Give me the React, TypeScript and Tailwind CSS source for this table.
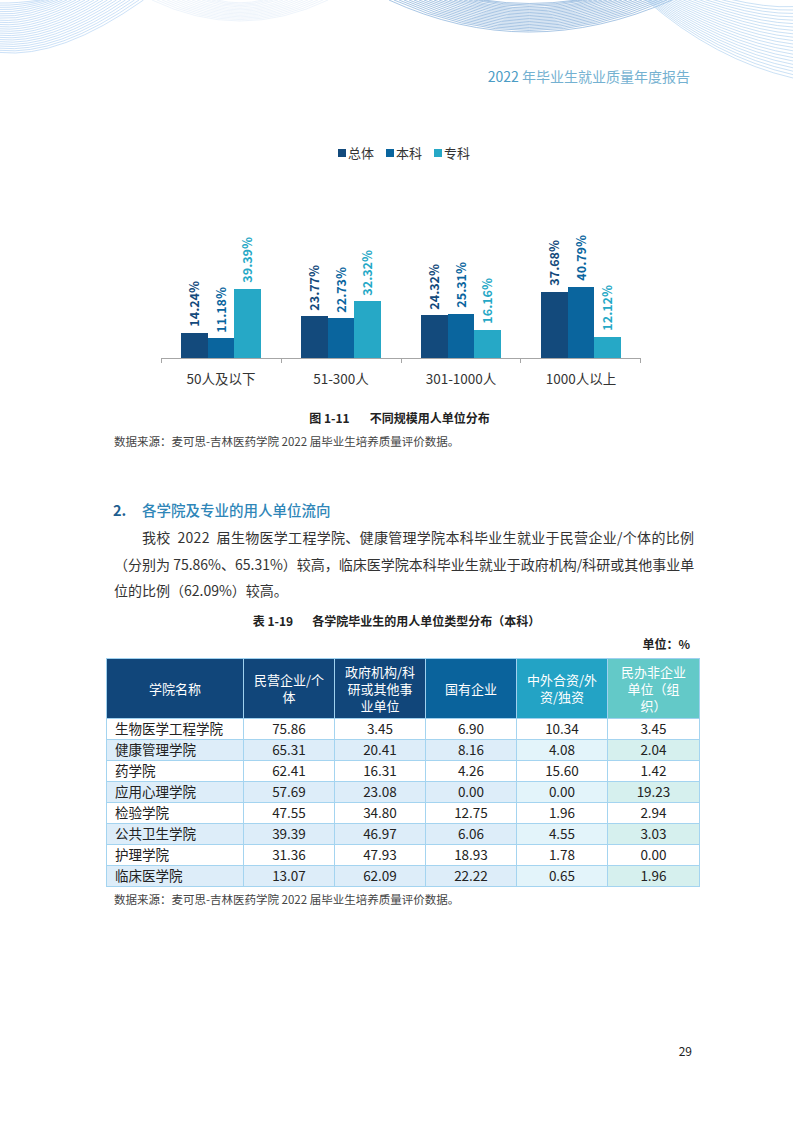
import React from "react";

const F = "font-['Noto_Sans_CJK_SC','Lato',sans-serif]";

const chart = [
  { name: "50人及以下", v: [14.24, 11.18, 39.39] },
  { name: "51-300人", v: [23.77, 22.73, 32.32] },
  { name: "301-1000人", v: [24.32, 25.31, 16.16] },
  { name: "1000人以上", v: [37.68, 40.79, 12.12] },
];

const series = [
  { name: "总体", bar: "bg-[#134a7c]", text: "text-[#134a7c]" },
  { name: "本科", bar: "bg-[#0a659e]", text: "text-[#0a659e]" },
  { name: "专科", bar: "bg-[#26a8c6]", text: "text-[#26a8c6]" },
];

const rows = [
  ["生物医学工程学院", "75.86", "3.45", "6.90", "10.34", "3.45"],
  ["健康管理学院", "65.31", "20.41", "8.16", "4.08", "2.04"],
  ["药学院", "62.41", "16.31", "4.26", "15.60", "1.42"],
  ["应用心理学院", "57.69", "23.08", "0.00", "0.00", "19.23"],
  ["检验学院", "47.55", "34.80", "12.75", "1.96", "2.94"],
  ["公共卫生学院", "39.39", "46.97", "6.06", "4.55", "3.03"],
  ["护理学院", "31.36", "47.93", "18.93", "1.78", "0.00"],
  ["临床医学院", "13.07", "62.09", "22.22", "0.65", "1.96"],
];

const headBg = ["bg-[#11467a]", "bg-[#11467a]", "bg-[#11467a]", "bg-[#0a639c]", "bg-[#23a3c5]", "bg-[#63c9c8]"];
const stripeBg = ["bg-[#ddedf9]", "bg-[#ddedf9]", "bg-[#ddedf9]", "bg-[#ddedf9]", "bg-[#e3f4fa]", "bg-[#d6f0ee]"];

const heads: React.ReactNode[] = [
  "学院名称",
  <>民营企业/个<br />体</>,
  <>政府机构/科<br />研或其他事<br />业单位</>,
  "国有企业",
  <>中外合资/外<br />资/独资</>,
  <>民办非企业<br />单位（组<br />织）</>,
];

function Waves() {
  const left = Array.from({ length: 24 }, (_, i) => {
    const y0 = 3 + i * 2.15;
    const x1 = 40 + i * 4.5;
    return `M0 ${y0} Q ${x1 * 0.42} ${y0 * 1.12} ${x1} 0`;
  });
  const faint = Array.from({ length: 14 }, (_, i) => {
    return `M${152 + i * 5} 0 Q 240 ${42 - i * 2.8} ${328 - i * 5} 0`;
  });
  const mid = Array.from({ length: 20 }, (_, i) => {
    return `M${389 + i * 5} 0 Q 528 ${64 - i * 3} ${672 - i * 5} 0`;
  });
  const right = Array.from({ length: 22 }, (_, i) => {
    return `M${646 - i * 0.5} ${-i * 1.5} Q ${715 + i * 1.2} ${60 - i * 2.4} 793 ${78 - i * 3.4}`;
  });
  return (
    <svg className="absolute top-0 left-0 pointer-events-none" width="793" height="130" viewBox="0 0 793 130" fill="none">
      {left.map((d, i) => (
        <path key={"l" + i} d={d} stroke="#a9cdf1" strokeWidth="0.6" />
      ))}
      {faint.map((d, i) => (
        <path key={"f" + i} d={d} stroke="#e2edf8" strokeWidth="0.6" />
      ))}
      {mid.map((d, i) => (
        <path key={"m" + i} d={d} stroke="#6f9fd2" strokeWidth="0.6" />
      ))}
      {right.map((d, i) => (
        <path key={"r" + i} d={d} stroke="#a8ccee" strokeWidth="0.6" />
      ))}
    </svg>
  );
}

function Chart() {
  return (
    <div className="w-[480px] ml-[161px]">
      {/* Legend */}
      <div className="flex justify-center items-center gap-[12px] pl-[6px] h-[16px] text-[13px] leading-[16px] text-[#333]">
        {series.map((s) => (
          <div key={s.name} className="flex items-center gap-[2px]">
            <span className={`w-[8px] h-[8px] ${s.bar}`} />
            <span>{s.name}</span>
          </div>
        ))}
      </div>

      <div className="grid grid-cols-4 h-[180px] mt-[17px]">
        {chart.map((g) => (
          <div key={g.name} className="flex justify-center items-end">
            {g.v.map((v, i) => (
              <div key={i} className="flex flex-col items-center w-[26.67px]">
                <span className={`[writing-mode:vertical-rl] rotate-180 text-[12.5px] font-bold leading-none mb-[6px] ${series[i].text}`}>
                  {v.toFixed(2)}%
                </span>
                <div className={`w-full ${series[i].bar}`} style={{ height: v * 1.752 }} />
              </div>
            ))}
          </div>
        ))}
      </div>
      {/* Axis */}
      <div className="flex border-t border-[#a6a6a6]">
        {chart.map((g, i) => (
          <div key={g.name} className={`flex-1 h-[4px] border-l border-[#a6a6a6] ${i === 3 ? "border-r" : ""}`} />
        ))}
      </div>
      <div className="grid grid-cols-4 mt-[6px] text-[13.5px] leading-[18px] text-[#333] text-center">
        {chart.map((g) => (
          <div key={g.name}>{g.name}</div>
        ))}
      </div>
    </div>
  );
}

function Table() {
  return (
    <table className="table-fixed border-collapse w-[593px] ml-[106px] text-[13.5px] text-[#222]">
      <colgroup>
        <col className="w-[137px]" />
        <col className="w-[91px]" />
        <col className="w-[91px]" />
        <col className="w-[91px]" />
        <col className="w-[91px]" />
        <col className="w-[92px]" />
      </colgroup>
      <thead>
        <tr className="h-[60px]">
          {heads.map((h, i) => (
            <th key={i} className={`border border-[#9fd1ef] font-normal text-white text-[13px] leading-[17px] text-center ${headBg[i]}`}>
              {h}
            </th>
          ))}
        </tr>
      </thead>
      <tbody>
        {rows.map((r, ri) => (
          <tr key={r[0]} className="h-[21px]">
            {r.map((c, ci) => (
              <td
                key={ci}
                className={`border border-[#a4d4f0] p-0 leading-[19px] ${ci === 0 ? "text-left pl-[8px]" : "text-center"} ${ri % 2 === 1 ? stripeBg[ci] : "bg-white"}`}
              >
                {c}
              </td>
            ))}
          </tr>
        ))}
      </tbody>
    </table>
  );
}

export default function App() {
  return (
    <div className={`relative w-[793px] h-[1122px] bg-white overflow-hidden ${F}`}>
      <Waves />

      {/* Running header */}
      <div className="relative pt-[66px] pr-[103px] text-right text-[14px] leading-[20px]">
        <span className="text-[#4b9cc5]">2022</span>
        <span className="text-[#74b1d1]"> 年毕业生就业质量年度报告</span>
      </div>

      <div className="mt-[59px]">
        <Chart />
      </div>

      {/* Figure caption */}
      <div className="mt-[22px] flex justify-center gap-[20px] text-[12px] leading-[18px] font-bold text-[#222] pl-[6px]">
        <span>图 1-11</span>
        <span>不同规模用人单位分布</span>
      </div>
      <div className="mt-[5px] pl-[114px] text-[11.5px] leading-[18px] text-[#444]">
        数据来源：麦可思-吉林医药学院 2022 届毕业生培养质量评价数据。
      </div>

      {/* Section heading */}
      <div className="mt-[50px] flex items-center pl-[113px] text-[14.5px] leading-[20px]">
        <span className="w-[29px] font-bold text-[#1d5f90]">2.</span>
        <span className="font-medium text-[#2f86b8]">各学院及专业的用人单位流向</span>
      </div>

      {/* Paragraph */}
      <div className="mt-[4px] ml-[114px] w-[576px] text-[14px] leading-[26.5px] text-[#333]">
        <div className="pl-[28px] tracking-[0.3px] whitespace-nowrap">
          我校&nbsp; 2022&nbsp; 届生物医学工程学院、健康管理学院本科毕业生就业于民营企业/个体的比例
        </div>
        <div className="whitespace-nowrap">
          （分别为 75.86%、65.31%）较高，临床医学院本科毕业生就业于政府机构/科研或其他事业单
        </div>
        <div>位的比例（62.09%）较高。</div>
      </div>

      {/* Table caption */}
      <div className="mt-[8px] flex justify-center gap-[19px] text-[12px] leading-[18px] font-bold text-[#222]">
        <span>表 1-19</span>
        <span>各学院毕业生的用人单位类型分布（本科）</span>
      </div>
      <div className="mt-[5px] pr-[103px] text-right text-[12px] leading-[18px] font-bold text-[#222]">单位：%</div>

      <div className="mt-[5px]">
        <Table />
      </div>
      <div className="mt-[3px] pl-[114px] text-[11.5px] leading-[18px] text-[#444]">
        数据来源：麦可思-吉林医药学院 2022 届毕业生培养质量评价数据。
      </div>

      {/* Page number */}
      <div className="absolute left-0 right-[101px] top-[1042px] text-right text-[12px] leading-[18px] text-[#222]">29</div>
    </div>
  );
}
